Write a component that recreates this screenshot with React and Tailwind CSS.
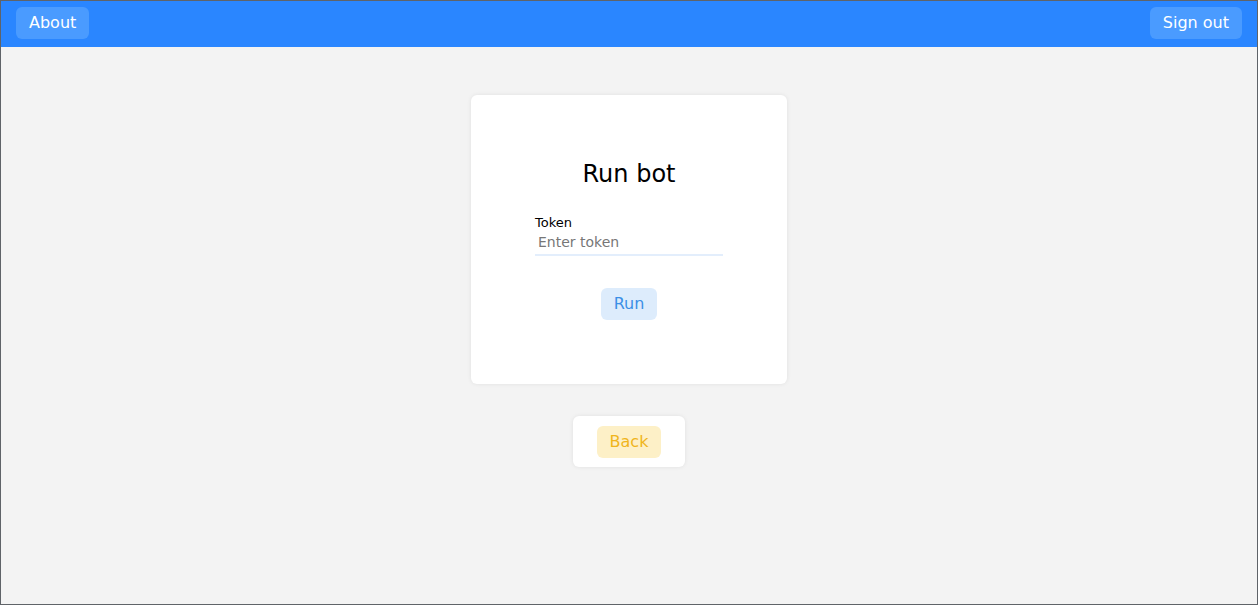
import React from "react";

export default function App() {
  return (
    <div
      className="h-[605px] flex flex-col border border-[#5f6368] bg-[#f3f3f3]"
      style={{ fontFamily: '"DejaVu Sans", sans-serif' }}
    >
      {/* HEADER */}
      <header className="h-[46px] shrink-0 bg-[#2a86ff] flex items-start justify-between px-[15px] pt-[6px]">
        <button className="h-[32px] px-[13px] rounded-md bg-[#4a9bff] text-white text-[16px]">
          About
        </button>
        <button className="h-[32px] px-[13px] rounded-md bg-[#4a9bff] text-white text-[16px]">
          Sign out
        </button>
      </header>

      {/* MAIN */}
      <main className="flex flex-col items-center">
        <div className="mt-[48px] w-[316px] h-[289px] bg-white rounded-md shadow-[0_0_4px_rgba(0,0,0,0.08)] flex flex-col items-center pt-[63px]">
          <h1 className="text-[24px] leading-[32px] text-black">Run bot</h1>

          <div className="mt-[24px] w-[188px] flex flex-col">
            <label className="text-[13px] leading-[18px] text-black">Token</label>
            <input
              placeholder="Enter token"
              className="mt-[1px] h-[23px] px-[3px] pb-[4px] text-[14px] leading-[17px] outline-none border-b-2 border-[#e3eefc] placeholder-[#777]"
            />
          </div>

          <button className="mt-[32px] h-[32px] px-[13px] rounded-md bg-[#ddecfc] text-[#3b8fe6] text-[16px]">
            Run
          </button>
        </div>

        <div className="mt-[32px] w-[112px] h-[51px] bg-white rounded-md shadow-[0_0_4px_rgba(0,0,0,0.08)] flex items-center justify-center">
          <button className="h-[32px] px-[13px] rounded-md bg-[#fdf0c7] text-[#f0b51c] text-[16px]">
            Back
          </button>
        </div>
      </main>
    </div>
  );
}
